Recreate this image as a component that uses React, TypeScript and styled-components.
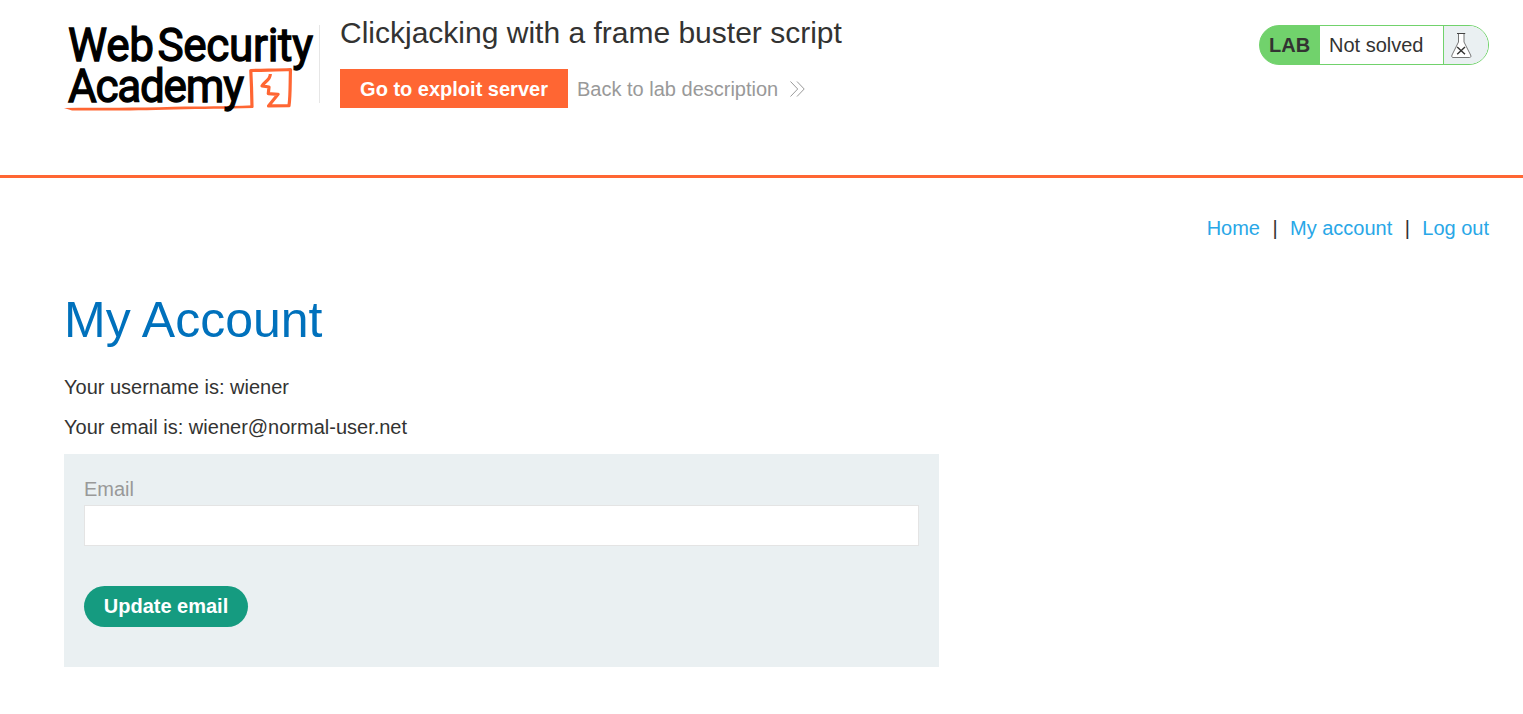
import React from "react";
import styled, { createGlobalStyle } from "styled-components";

const GlobalStyle = createGlobalStyle`
  * { box-sizing: border-box; }
  body {
    margin: 0;
    background: #fff;
    color: #333332;
    font-family: "Liberation Sans", Arial, sans-serif;
    font-size: 20px;
    line-height: 24px;
  }
`;

const Header = styled.header`
  display: flex;
  align-items: flex-start;
  height: 178px;
  padding: 25px 34px 0 64px;
  border-bottom: 3px solid #ff6633;
`;

const Logo = styled.svg`
  display: block;
  flex: none;
  width: 256px;
  height: 90px;
  overflow: visible;
`;

const LogoWord = styled.text`
  font-family: Roboto, "Liberation Sans", sans-serif;
  font-size: 46.4px;
  font-weight: 400;
  fill: #000;
  stroke: #000;
  stroke-width: 1.3px;
`;

const Heading = styled.div`
  flex: 1;
  height: 78px;
  padding-left: 20px;
  border-left: 1px solid #e6e6e6;
  margin-left: -1px;
`;

const Title = styled.h2`
  margin: -10px 0 18px;
  font-size: 30px;
  line-height: 36px;
  font-weight: 400;
`;

const Actions = styled.div`
  display: flex;
  align-items: center;
`;

const ExploitLink = styled.a`
  width: 228px;
  height: 39px;
  margin-right: 9px;
  background: #ff6633;
  color: #fff;
  font-weight: 700;
  line-height: 40px;
  text-align: center;
`;

const BackLink = styled.a`
  display: flex;
  align-items: center;
  gap: 12px;
  color: #999;
`;

const LabStatus = styled.div`
  display: flex;
  width: 230px;
  height: 40px;
  border: 1px solid #71d26c;
  border-radius: 20px;
  background: linear-gradient(90deg, #71d26c 60px, #fff 60px);
  overflow: hidden;
  line-height: 38px;
`;

const LabTag = styled.strong`
  width: 60px;
  padding-left: 9px;
`;

const LabState = styled.span`
  flex: 1;
  padding-left: 9px;
`;

const LabFlask = styled.span`
  display: flex;
  width: 45px;
  padding: 6px 0 0 7px;
  border-left: 1px solid #71d26c;
  background: #eaf0f2;
`;

const Nav = styled.nav`
  display: flex;
  justify-content: flex-end;
  padding: 38px 34px 0;
`;

const NavLink = styled.a`
  color: #29a7e7;
`;

const Divider = styled.span`
  width: 30px;
  text-align: center;
`;

const Main = styled.main`
  width: 939px;
  padding-left: 64px;
`;

const PageTitle = styled.h1`
  margin: 50px 0 25px;
  color: #0071bc;
  font-size: 50px;
  line-height: 60px;
  font-weight: 400;
`;

const Detail = styled.p`
  margin: 0 0 16px;
`;

const EmailForm = styled.form`
  height: 213px;
  margin-top: -1px;
  padding: 23px 20px 0;
  background: #eaf0f2;
`;

const Label = styled.label`
  display: block;
  margin-bottom: 4px;
  color: #999;
`;

const Input = styled.input`
  display: block;
  width: 100%;
  height: 41px;
  margin-bottom: 40px;
  border: 1px solid #e4e4e4;
  background: #fff;
  font: inherit;
`;

const SubmitButton = styled.button`
  width: 164px;
  height: 41px;
  padding: 0;
  border: 0;
  border-radius: 21px;
  background: #159b80;
  color: #fff;
  font: 700 20px "Liberation Sans", Arial, sans-serif;
`;

const WORD_SCALE = 0.95;

function Word({ x, y, width, children }: { x: number; y: number; width: number; children: string }) {
  return (
    <LogoWord
      transform={`translate(${x} ${y}) scale(${WORD_SCALE} 1)`}
      textLength={width / WORD_SCALE}
      lengthAdjust="spacing"
    >
      {children}
    </LogoWord>
  );
}

function AcademyLogo() {
  return (
    <Logo viewBox="0 0 256 90">
      <Word x={4} y={35.5} width={86}>Web</Word>
      <Word x={93.5} y={35.5} width={155.5}>Security</Word>
      <g fill="none" stroke="#ff6633" strokeLinejoin="round">
        <path d="M188 82.5 L187.5 62 L186.8 45.5 C200 45 215 45.2 226.5 44.5 C226 57 226.5 70 225 80.7 L204.5 80.9 L214 69.3 L204.3 68.7 L205 62 L198 60.9 C200 57 206.5 55 206.3 49" strokeWidth="3.2" />
      </g>
      <path d="M0 83 C40 82.4 70 83.2 110 81.8 C140 81.3 160 81.6 189 80.3 L189 83 C160 84 140 83.8 110 84.4 C70 85.8 40 85.4 8 85.4 Z" fill="#ff6633" />
      <Word x={4} y={76.5} width={176}>Academy</Word>
    </Logo>
  );
}

export default function App() {
  return (
    <>
      <GlobalStyle />
      <Header>
        <AcademyLogo />
        <Heading>
          <Title>Clickjacking with a frame buster script</Title>
          <Actions>
            <ExploitLink>Go to exploit server</ExploitLink>
            <BackLink>
              Back to lab description
              <svg width="15" height="16" viewBox="0 0 15 16" fill="none" stroke="#999" strokeWidth="1">
                <path d="M0.5 0.5 L7.7 8 L0.5 15.5 M7 0.5 L14.2 8 L7 15.5" />
              </svg>
            </BackLink>
          </Actions>
        </Heading>
        <LabStatus>
          <LabTag>LAB</LabTag>
          <LabState>Not solved</LabState>
          <LabFlask>
            <svg width="21" height="27" viewBox="0 0 21 27" fill="none">
              <path d="M7.5 2 V10 L1 23 C0.4 24.8 1 25.5 2 25.5 H18.5 C19.8 25.5 20.3 24.5 19.6 23 L13 10 V2" fill="#fff" stroke="#666" strokeWidth="0.9" />
              <path d="M6 1.5 H14.2" stroke="#444" strokeWidth="1.2" />
              <path d="M6.2 15 L14 22.3 M14 15 L6.2 22.3" stroke="#333332" strokeWidth="1.4" />
            </svg>
          </LabFlask>
        </LabStatus>
      </Header>
      <Nav>
        <NavLink>Home</NavLink>
        <Divider>|</Divider>
        <NavLink>My account</NavLink>
        <Divider>|</Divider>
        <NavLink>Log out</NavLink>
      </Nav>
      <Main>
        <PageTitle>My Account</PageTitle>
        <Detail>Your username is: wiener</Detail>
        <Detail>Your email is: wiener@normal-user.net</Detail>
        <EmailForm>
          <Label htmlFor="email">Email</Label>
          <Input id="email" type="email" />
          <SubmitButton type="button">Update email</SubmitButton>
        </EmailForm>
      </Main>
    </>
  );
}
